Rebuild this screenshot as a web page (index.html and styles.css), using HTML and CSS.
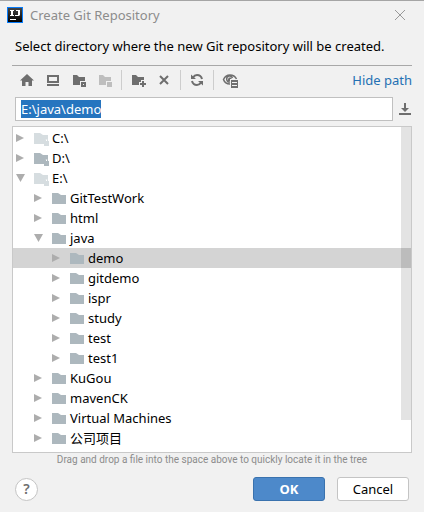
FILE: index.html
```html
<!DOCTYPE html>
<html lang="en">
<head>
<meta charset="utf-8">
<meta name="viewport" content="width=device-width, initial-scale=1">
<title>Create Git Repository</title>
<link rel="stylesheet" href="styles.css">
</head>
<body>
<svg class="defs" aria-hidden="true">
  <symbol id="folder" viewBox="0 0 16 16"><path d="M0 3h6l3 2h5v9H0z"/></symbol>
  <symbol id="drive" viewBox="0 0 16 16"><path d="M0 3h6l3 2h5v4h-3v5H0z"/><path class="lock" d="M10 11h1v-1q0-2 1.500-2t1.500 2v1h1v5h-5zM12 11h1V9.500h-1z" fill-rule="evenodd"/></symbol>
  <symbol id="right" viewBox="0 0 10 10"><path d="M0 1l8 4-8 4z"/></symbol>
  <symbol id="down" viewBox="0 0 10 10"><path d="M0 1h9L4.500 9z"/></symbol>
</svg>
<main class="dialog">
  <header class="titlebar">
    <svg class="logo" viewBox="0 0 16 16" aria-hidden="true">
      <defs><linearGradient id="logo-fill" x2="0" y2="1"><stop stop-color="#444"/><stop offset="1" stop-color="#000"/></linearGradient></defs>
      <path fill="#087cfa" d="M0 0h16v16H0z"/><path fill="url(#logo-fill)" d="M1 1h14v14H1z"/>
      <path fill="#fff" d="M3 3h4v1H6v4h1v1H3V8h1V4H3zM9 3h4v5l-1 1H8V8h3V4H9zM3 12h6v1H3z"/>
    </svg>
    <h1 class="title">Create Git Repository</h1>
    <button class="close" aria-label="Close"><svg width="12" height="12" viewBox="0 0 12 12"><path d="M1 1l10 10M11 1L1 11"/></svg></button>
  </header>
  <p class="prompt">Select directory where the new Git repository will be created.</p>
  <section class="chooser">
    <div class="toolbar">
      <button class="tool" aria-label="Home"><svg viewBox="0 0 16 16"><path d="M8 2l7 6.500h-2V14H9.500v-4h-3v4H3V8.500H1z"/></svg></button>
      <button class="tool" aria-label="Desktop"><svg viewBox="0 0 16 16"><path fill-rule="evenodd" d="M2 3h12v8H2zM4 5v4h8V5zM2 12h12v2H2z"/></svg></button>
      <button class="tool" aria-label="Project directory"><svg viewBox="0 0 16 16"><path d="M2 3h4l2 2h6v4H9v4H2z"/><path fill-rule="evenodd" d="M10 10h5v5h-5zM12 12v1h1v-1z"/></svg></button>
      <button class="tool" aria-label="Module directory" disabled><svg viewBox="0 0 16 16"><path d="M2 3h4l2 2h6v4H9v4H2z"/><path d="M10 10h5v5h-5z"/></svg></button>
      <span class="separator"></span>
      <button class="tool" aria-label="New folder"><svg viewBox="0 0 16 16"><path d="M2 3h4l2 2h6v3h-3v2H9v3H2zM12 9h2v2h2v2h-2v2h-2v-2h-2v-2h2z"/></svg></button>
      <button class="tool" aria-label="Delete"><svg viewBox="0 0 16 16"><path class="line" d="M4 4l8 8M12 4l-8 8"/></svg></button>
      <span class="separator"></span>
      <button class="tool" aria-label="Refresh"><svg viewBox="0 0 16 16"><path class="line" d="M4 5.500Q5.500 3 8 3q4 0 5 4M12 10.500Q10.500 13 8 13q-4 0-5-4"/><path d="M2 2.500V7h5zM14 13.500V9H9z"/></svg></button>
      <span class="separator"></span>
      <button class="tool" aria-label="Show hidden files"><svg viewBox="0 0 16 16"><path class="line thin" d="M8 12Q3 12 1.500 7.500 3.500 3 8 3t6.500 4M10.500 6A3 3 0 1 0 8 10"/><path d="M7 5.500h2.500V7H8v2H6V7z"/><path fill-rule="evenodd" d="M9 8h7v8H9zM10 10v1h5v-1zM10 13v1h5v-1z"/></svg></button>
      <a class="toggle" href="#path">Hide path</a>
    </div>
    <div class="path-row">
      <input class="path" id="path" type="text" aria-label="Path" value="E:\java\demo" spellcheck="false" autofocus>
      <button class="history" aria-label="Path history"><svg width="12" height="12" viewBox="0 0 12 12"><path d="M5 0h2v5h3L6 9 2 5h3zM0 10h12v2H0z"/></svg></button>
    </div>
    <div class="tree-box">
      <ul class="tree" role="tree" aria-label="Directories">
        <li class="row pale" role="treeitem"><svg class="arrow"><use href="#right"/></svg><svg class="icon"><use href="#drive"/></svg>C:\</li>
        <li class="row" role="treeitem"><svg class="arrow"><use href="#right"/></svg><svg class="icon"><use href="#drive"/></svg>D:\</li>
        <li class="row pale" role="treeitem" aria-expanded="true"><svg class="arrow"><use href="#down"/></svg><svg class="icon"><use href="#drive"/></svg>E:\</li>
        <li class="row level-1" role="treeitem"><svg class="arrow"><use href="#right"/></svg><svg class="icon"><use href="#folder"/></svg>GitTestWork</li>
        <li class="row level-1" role="treeitem"><svg class="arrow"><use href="#right"/></svg><svg class="icon"><use href="#folder"/></svg>html</li>
        <li class="row level-1" role="treeitem" aria-expanded="true"><svg class="arrow"><use href="#down"/></svg><svg class="icon"><use href="#folder"/></svg>java</li>
        <li class="row level-2 selected" role="treeitem" aria-selected="true"><svg class="arrow"><use href="#right"/></svg><svg class="icon"><use href="#folder"/></svg>demo</li>
        <li class="row level-2" role="treeitem"><svg class="arrow"><use href="#right"/></svg><svg class="icon"><use href="#folder"/></svg>gitdemo</li>
        <li class="row level-2" role="treeitem"><svg class="arrow"><use href="#right"/></svg><svg class="icon"><use href="#folder"/></svg>ispr</li>
        <li class="row level-2" role="treeitem"><svg class="arrow"><use href="#right"/></svg><svg class="icon"><use href="#folder"/></svg>study</li>
        <li class="row level-2" role="treeitem"><svg class="arrow"><use href="#right"/></svg><svg class="icon"><use href="#folder"/></svg>test</li>
        <li class="row level-2" role="treeitem"><svg class="arrow"><use href="#right"/></svg><svg class="icon"><use href="#folder"/></svg>test1</li>
        <li class="row level-1" role="treeitem"><svg class="arrow"><use href="#right"/></svg><svg class="icon"><use href="#folder"/></svg>KuGou</li>
        <li class="row level-1" role="treeitem"><svg class="arrow"><use href="#right"/></svg><svg class="icon"><use href="#folder"/></svg>mavenCK</li>
        <li class="row level-1" role="treeitem"><svg class="arrow"><use href="#right"/></svg><svg class="icon"><use href="#folder"/></svg>Virtual Machines</li>
        <li class="row level-1" role="treeitem"><svg class="arrow"><use href="#right"/></svg><svg class="icon"><use href="#folder"/></svg><span lang="zh-CN">公司项目</span></li>
      </ul>
      <div class="thumb"></div>
    </div>
    <p class="hint">Drag and drop a file into the space above to quickly locate it in the tree</p>
  </section>
  <footer class="actions">
    <button class="help" aria-label="Help">?</button>
    <button class="button primary">OK</button>
    <button class="button">Cancel</button>
  </footer>
</main>
<script src="script.js"></script>
</body>
</html>
```
FILE: styles.css
```css
* { box-sizing: border-box; }
body {
  margin: 0;
  background: #f1f1f1;
  color: #000;
  font: 13px/20px "Noto Sans", "Noto Sans CJK SC", sans-serif;
}
button { padding: 0; border: 0; background: none; color: inherit; font: inherit; }
h1, p, ul { margin: 0; padding: 0; }
svg { display: block; flex: none; }
.defs { position: absolute; width: 0; height: 0; }
.dialog { display: flex; flex-direction: column; min-height: 100vh; border-top: 1px solid #a5a5a5; }

.titlebar { display: flex; align-items: center; height: 28px; padding: 0 18px 0 7px; }
.logo { width: 16px; height: 16px; }
.title { flex: 1; margin-left: 7px; color: #8c8c8c; font-size: 13px; font-weight: 400; }
.close svg { fill: none; stroke: #999; }
.prompt { padding: 7px 15px 9px; }

.chooser { margin: 0 12px; }
.toolbar { display: flex; align-items: center; height: 32px; padding: 0 0 3px 2px; border-top: 1px solid #a8a8a8; }
.tool { display: flex; justify-content: center; width: 26px; }
.tool svg { width: 16px; height: 16px; fill: #6e6e6e; }
.tool:disabled svg { fill: #bebebe; }
.tool .line { fill: none; stroke: #6e6e6e; stroke-width: 2; }
.tool .thin { stroke-width: 1.5; }
.separator { width: 1px; height: 20px; margin: 0 3px; background: #cdcdcd; }
.toggle { margin-left: auto; color: #2470b3; text-decoration: none; }

.path-row { display: flex; align-items: center; margin-left: 3px; }
.path {
  flex: 1;
  min-width: 0;
  height: 24px;
  padding: 0 5px;
  border: 1px solid #c0c0c0;
  outline: 0;
  background: #fff;
  font: inherit;
  line-height: 18px;
}
.path::selection { background: #2675bf; color: #fff; }
.history { margin: 0 1px 0 6px; }
.history svg { fill: #6e6e6e; }

.tree-box { position: relative; margin-top: 5px; padding: 1px 0 4px; border: 1px solid #c9c9c9; background: #fff; }
.tree { list-style: none; }
.row { display: flex; align-items: center; height: 20px; padding-left: 3px; white-space: nowrap; }
.level-1 { padding-left: 21px; }
.level-2 { padding-left: 39px; }
.selected { background: #d4d4d4; }
.arrow { width: 10px; height: 10px; margin-right: 8px; fill: #adadad; }
.icon { width: 16px; height: 16px; margin-right: 2px; fill: #adb8be; }
.icon .lock { fill: #94a1a9; }
.pale .icon { fill: #d6dde0; }
.thumb { position: absolute; top: 0; right: 0; width: 10px; height: 90%; background: rgba(0, 0, 0, .11); }
.hint { color: #8c8c8c; font-family: Roboto, sans-serif; font-size: 10px; line-height: 14px; text-align: center; }

.actions { display: flex; align-items: center; gap: 12px; padding: 10px 15px 10px; }
.help { width: 23px; height: 23px; margin-right: auto; border: 1px solid #c4c4c4; border-radius: 50%; background: #fff; color: #6e6e6e; font-size: 14px; font-weight: 600; line-height: 20px; }
.button { width: 72px; height: 24px; border: 1px solid #c4c4c4; border-radius: 3px; background: #fff; line-height: 20px; }
.primary { border-color: #3a72ae; background: #4d89ca; color: #fff; font-weight: 700; }
```
FILE: script.js
```js
const path = document.getElementById("path");
path.focus();
path.select();
```
